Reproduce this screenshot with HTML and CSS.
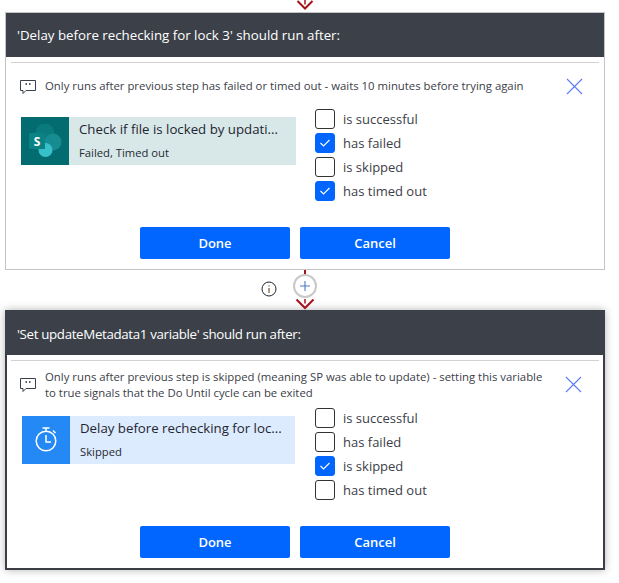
FILE: index.html
```html
<!DOCTYPE html>
<html lang="en">
<head>
<meta charset="utf-8">
<title>Run after</title>
<link rel="stylesheet" href="styles.css">
</head>
<body>
<div class="top-arrow">
  <svg width="20" height="12" viewBox="0 0 20 12"><path d="M2.5 1 L10 8.5 L17.5 1" fill="none" stroke="#a4121a" stroke-width="2"/><path d="M10 0V4.5" stroke="#a4121a" stroke-width="1.5"/></svg>
</div>
<section class="card">
  <h2 class="card-head">'Delay before rechecking for lock 3' should run after:</h2>
  <div class="rule"></div>
  <div class="note">
    <svg class="note-icon" width="18" height="16" viewBox="0 0 18 16"><path d="M1.5 1.5H16.5V11.5H7L4 14.5V11.5H1.5Z" fill="none" stroke="#3b4048"/><path d="M6.5 5H8M10 5H11.5" stroke="#222" stroke-width="1.6"/></svg>
    <p class="note-text">Only runs after previous step has failed or timed out - waits 10 minutes before trying again</p>
    <svg class="close" width="17" height="17" viewBox="0 0 17 17"><path d="M1 1L16 16M16 1L1 16" stroke="#5b7cf0" stroke-width="1.1"/></svg>
  </div>
  <div class="body">
    <div class="step step-sp">
      <div class="step-icon icon-sp">
        <svg width="34" height="34" viewBox="0 0 34 34">
          <circle cx="17" cy="9" r="9.5" fill="#0a7a7e"/>
          <circle cx="25" cy="18" r="8.5" fill="#178c90"/>
          <circle cx="17.500" cy="26" r="7" fill="#37c0c8"/>
          <rect x="1" y="9" width="16" height="16" rx="1" fill="#0b8286"/>
          <text class="sp-letter" x="9" y="21.500" text-anchor="middle">S</text>
        </svg>
      </div>
      <div class="step-text">
        <div class="step-title">Check if file is locked by updati...</div>
        <div class="step-sub">Failed, Timed out</div>
      </div>
    </div>
    <ul class="checks">
      <li class="check"><span class="box"></span>is successful</li>
      <li class="check"><span class="box on"><svg width="20" height="20" viewBox="0 0 20 20"><path d="M5.500 10L8.500 13L14.500 7" fill="none" stroke="#fff" stroke-width="1.100"/></svg></span>has failed</li>
      <li class="check"><span class="box"></span>is skipped</li>
      <li class="check"><span class="box on"><svg width="20" height="20" viewBox="0 0 20 20"><path d="M5.500 10L8.500 13L14.500 7" fill="none" stroke="#fff" stroke-width="1.100"/></svg></span>has timed out</li>
    </ul>
  </div>
  <div class="actions">
    <button class="btn">Done</button>
    <button class="btn">Cancel</button>
  </div>
</section>

<div class="connector">
  <div class="conn-line"></div>
  <svg class="conn-info" width="16" height="16" viewBox="0 0 16 16"><circle cx="8" cy="8" r="7" fill="none" stroke="#1f2530" stroke-width="1"/><path d="M8 7V12M8 4.200V5.600" stroke="#7a5a2a" stroke-width="1.200"/></svg>
  <div class="conn-plus">
    <svg width="12" height="12" viewBox="0 0 12 12"><path d="M6 1V11M1 6H11" stroke="#4a78c8" stroke-width="1.100"/></svg>
  </div>
  <svg class="conn-arrow" width="20" height="12" viewBox="0 0 20 12"><path d="M1.500 1.500L10 10L18.500 1.500" fill="none" stroke="#a4121a" stroke-width="2"/><path d="M10 1V5.500" stroke="#a4121a" stroke-width="1.500"/></svg>
</div>

<section class="card card-active">
  <h2 class="card-head">'Set updateMetadata1 variable' should run after:</h2>
  <div class="rule"></div>
  <div class="note note-two">
    <svg class="note-icon" width="18" height="16" viewBox="0 0 18 16"><path d="M1.500 1.500H16.500V11.500H7L4 14.500V11.500H1.500Z" fill="none" stroke="#3b4048"/><path d="M6.500 5H8M10 5H11.500" stroke="#222" stroke-width="1.600"/></svg>
    <p class="note-text">Only runs after previous step is skipped (meaning SP was able to update) - setting this variable to true signals that the Do Until cycle can be exited</p>
    <svg class="close" width="17" height="17" viewBox="0 0 17 17"><path d="M1 1L16 16M16 1L1 16" stroke="#5b7cf0" stroke-width="1.100"/></svg>
  </div>
  <div class="body">
    <div class="step step-delay">
      <div class="step-icon icon-delay">
        <svg width="24" height="28" viewBox="0 0 24 28"><circle cx="12" cy="15" r="9.800" fill="none" stroke="#fff" stroke-width="1.500"/><path d="M12 9V16H17" fill="none" stroke="#fff" stroke-width="1.500"/><path d="M8.500 2H15.500M12 2V5M19 4.500L21.500 7" fill="none" stroke="#fff" stroke-width="1.500"/></svg>
      </div>
      <div class="step-text">
        <div class="step-title">Delay before rechecking for loc...</div>
        <div class="step-sub">Skipped</div>
      </div>
    </div>
    <ul class="checks">
      <li class="check"><span class="box"></span>is successful</li>
      <li class="check"><span class="box"></span>has failed</li>
      <li class="check"><span class="box on"><svg width="20" height="20" viewBox="0 0 20 20"><path d="M5.500 10L8.500 13L14.500 7" fill="none" stroke="#fff" stroke-width="1.100"/></svg></span>is skipped</li>
      <li class="check"><span class="box"></span>has timed out</li>
    </ul>
  </div>
  <div class="actions">
    <button class="btn">Done</button>
    <button class="btn">Cancel</button>
  </div>
</section>
</body>
</html>
```
FILE: styles.css
```css
* { box-sizing: border-box; }
html, body { margin: 0; padding: 0; background: #fff; }
body {
  width: 619px;
  height: 583px;
  overflow: hidden;
  padding: 12px 14px 0 5px;
  position: relative;
  font-family: "Open Sans", "Noto Sans", "Liberation Sans", sans-serif;
  color: #252a33;
}
.top-arrow { position: absolute; left: 295px; top: 0; width: 20px; height: 12px; line-height: 0; }
.card {
  width: 600px;
  height: 258px;
  border: 1px solid #c4c4c4;
  background: #fff;
  display: flex;
  flex-direction: column;
}
.card-active {
  height: 260px;
  border: 2px solid #3b3e44;
  border-top-width: 0;
  box-shadow: 0 0 8px rgba(0, 0, 0, 0.3);
}
.card-head {
  margin: 0;
  height: 44px;
  flex: none;
  background: #3c4149;
  color: #fff;
  font-size: 13.300px;
  font-weight: 400;
  line-height: 44px;
  padding-left: 11px;
}
.card-active .card-head { height: 45px; line-height: 49px; margin: 0 -2px; padding-left: 12px; letter-spacing: -0.33px; }
.rule { height: 1px; background: #d2d2d2; margin: 5px 5px 0; flex: none; }
.card-active .rule { margin: 5px 4px 0; }
.note { display: flex; align-items: center; height: 44px; padding: 2px 21px 0 13px; flex: none; }
.note-two { height: 45px; padding: 1px 21px 0 12px; }
.note-icon { flex: none; margin-right: 8px; margin-top: 2px; }
.note-text { margin: 0; flex: 1; font-size: 11.360px; line-height: 16px; color: #3b4048; }
.note-two .note-text { margin-top: 2px; }
.close { flex: none; margin-left: 8px; }
.note-two .close { margin-left: 16px; }
.body { display: flex; padding: 0 0 0 15px; height: 96px; flex: none; }
.step { width: 275px; height: 48px; display: flex; flex: none; margin-top: 10px; }
.step-sp { background: #d8e8e8; }
.step-delay { background: #dcebfd; width: 273px; }
.step-icon { width: 48px; height: 48px; display: flex; align-items: center; justify-content: center; flex: none; }
.icon-sp { background: #036c70; }
.icon-delay { background: #2488f5; }
.sp-letter { font: 700 12px "Open Sans", sans-serif; fill: #fff; }
.step-text { padding: 3px 0 0 10px; white-space: nowrap; }
.step-title { font-size: 13.250px; line-height: 18px; color: #1f2530; }
.step-sub { font-size: 11.250px; line-height: 18px; margin-top: 6px; color: #252a33; }
.checks { list-style: none; margin: 0 0 0 19px; padding: 0; }
.step-delay + .checks { margin-left: 20px; }
.check { display: flex; align-items: center; height: 24px; font-size: 13px; color: #3b4048; }
.box { width: 20px; height: 20px; border: 1px solid #333; border-radius: 3px; margin-right: 8px; flex: none; line-height: 0; }
.box.on { background: #0066ff; border-color: #0066ff; }
.box.on svg { margin: -1px; }
.actions { display: flex; gap: 10px; margin-top: 24px; padding-left: 134px; }
.card-active .actions { padding-left: 133px; }
.btn {
  width: 150px;
  height: 32px;
  border: 0;
  border-radius: 2px;
  background: #0066ff;
  color: #fff;
  font: 600 13px "Open Sans", sans-serif;
  padding: 0;
}
.connector { position: relative; height: 40px; width: 600px; }
.conn-line { position: absolute; left: 299px; top: 0; width: 2px; height: 5px; background: #a4121a; }
.conn-info { position: absolute; left: 256px; top: 11px; }
.conn-plus {
  position: absolute; left: 288px; top: 4px; width: 24px; height: 24px;
  border: 2px solid #c8c8c8; border-radius: 50%; background: #fff;
  display: flex; align-items: center; justify-content: center;
}
.conn-arrow { position: absolute; left: 290px; top: 28px; }
```
